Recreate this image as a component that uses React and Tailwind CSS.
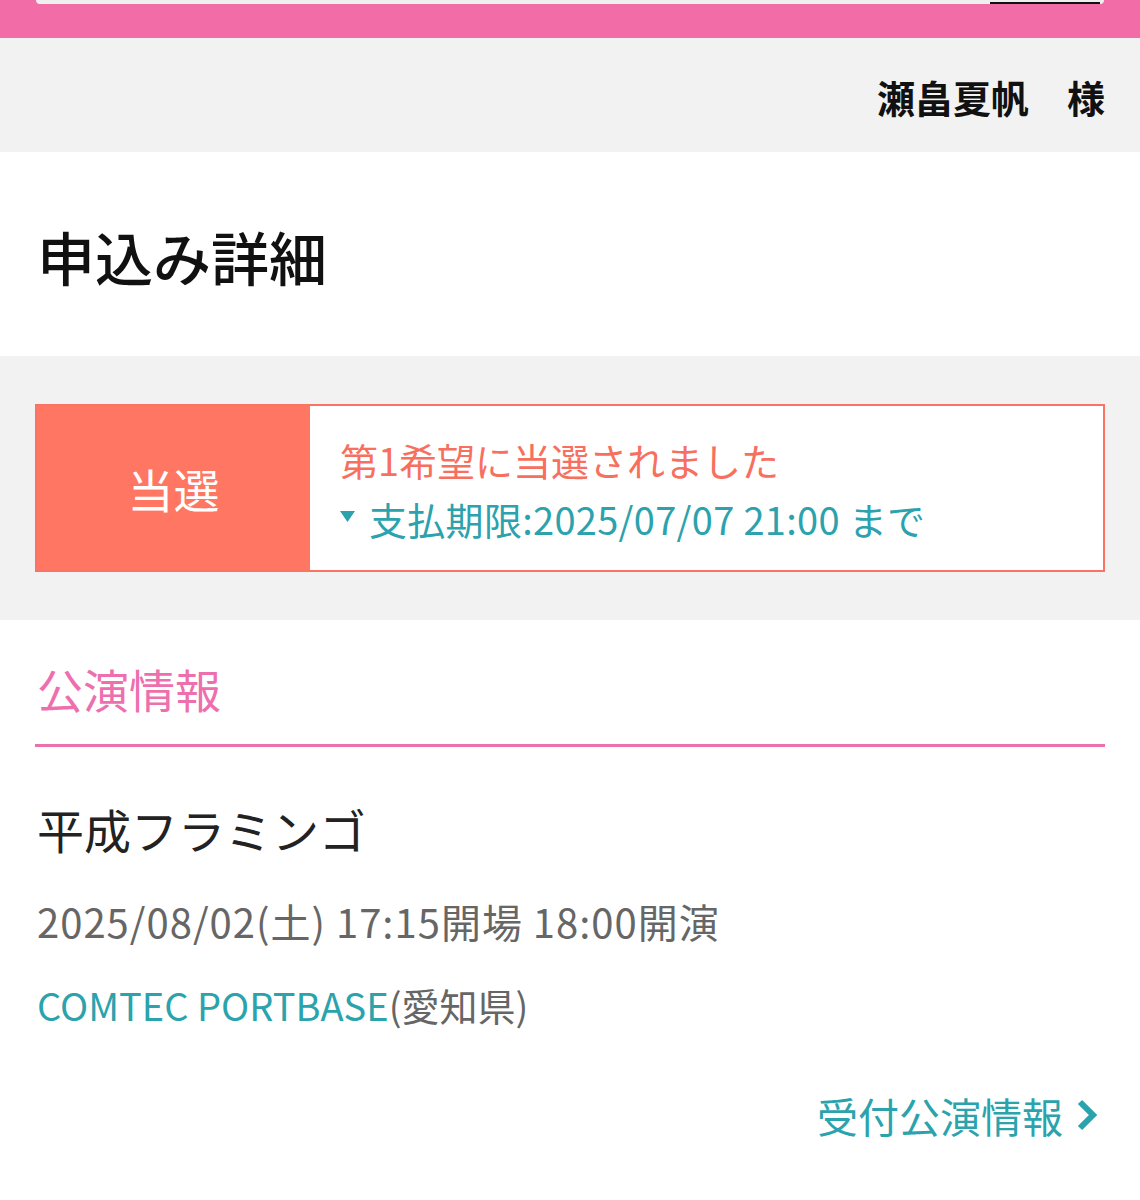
import React from "react";

export default function App() {
  const font = { fontFamily: '"Noto Sans CJK JP", "Noto Sans", sans-serif' };
  return (
    <div className="w-[1140px] min-h-[1200px] bg-white" style={font}>
      {/* pink header with cut-off search bar */}
      <div className="h-[38px] bg-[#f26ca8]">
        <div className="mx-[36px] h-[4px] rounded-b-[8px] bg-[#efefef] flex justify-end">
          <div className="w-[110px] mr-[4px] border-b-[2px] border-[#111]"></div>
        </div>
      </div>

      {/* name band */}
      <div className="h-[114px] bg-[#f2f2f2] flex items-center justify-end pr-[35px] pt-[4px]">
        <span className="text-[38px] font-bold text-[#111] leading-none">瀬畠夏帆　様</span>
      </div>

      {/* title */}
      <div className="h-[204px] flex items-center px-[37px] pt-[4px]">
        <h1 className="text-[58px] font-medium text-[#111] leading-none">申込み詳細</h1>
      </div>

      {/* result box */}
      <div className="bg-[#f2f2f2] px-[35px] py-[48px]">
        <div className="flex h-[168px] border-[2px] border-[#fb7463] bg-white">
          <div className="w-[273px] bg-[#ff7662] flex items-center justify-center">
            <span className="text-[46px] text-white leading-none">当選</span>
          </div>
          <div className="flex flex-col justify-center pl-[30px] pt-[2px]">
            <p className="text-[38px] text-[#f7705f] leading-[59px]">第1希望に当選されました</p>
            <p className="text-[38px] text-[#2ba2ad] leading-[59px] flex items-center tracking-[0.3px]">
              <svg width="15" height="11" viewBox="0 0 15 11" className="mr-[14px] mb-[4px]">
                <polygon points="0,0 15,0 7.5,11" fill="#2ba2ad" />
              </svg>
              支払期限:2025/07/07 21:00 まで
            </p>
          </div>
        </div>
      </div>

      {/* performance info */}
      <div className="px-[35px]">
        <div className="pt-[34px] pb-[21px] border-b-[3px] border-[#ee6fae]">
          <h2 className="text-[46px] text-[#ee6fae] leading-[69px] pl-[2px]">公演情報</h2>
        </div>
        <div className="pl-[2px]">
          <p className="mt-[47px] text-[47px] text-[#222] leading-[69px]">平成フラミンゴ</p>
          <p className="mt-[30px] text-[40px] text-[#666] leading-[57px] tracking-[1px]">2025/08/02(土) 17:15開場 18:00開演</p>
          <p className="mt-[28px] text-[38px] leading-[54px]">
            <span className="text-[#2ba3ad]">COMTEC PORTBASE</span>
            <span className="text-[#666]">(愛知県)</span>
          </p>
        </div>
        <div className="mt-[53px] flex justify-end items-center pr-[6px]">
          <span className="text-[41px] text-[#2ba3ad] leading-[60px]">受付公演情報</span>
          <svg width="24" height="34" viewBox="0 0 24 34" className="ml-[12px]">
            <polyline points="5,4 18,17 5,30" fill="none" stroke="#2ba3ad" strokeWidth="6" />
          </svg>
        </div>
      </div>
    </div>
  );
}
